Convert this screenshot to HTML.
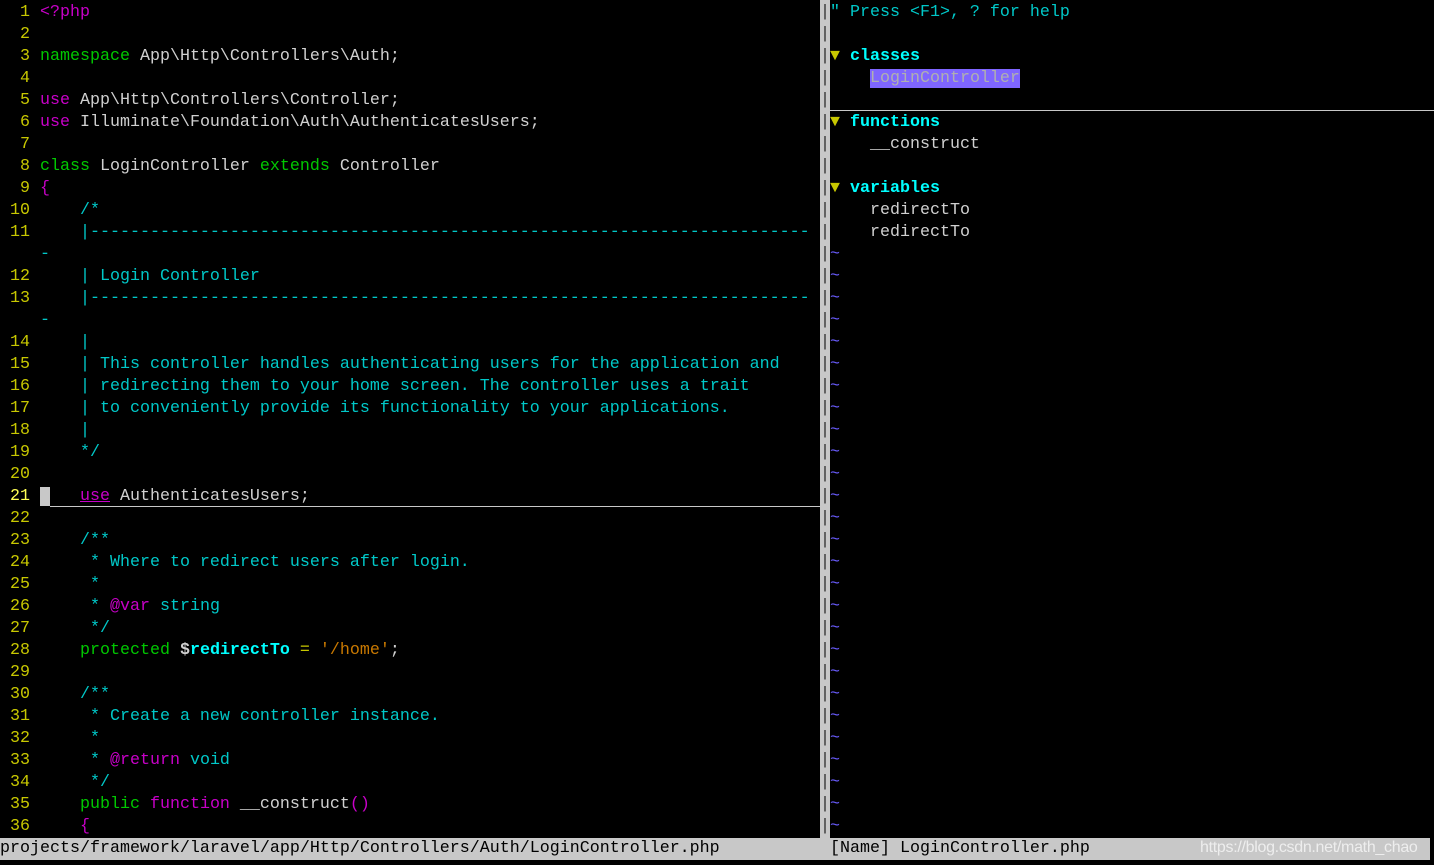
<!DOCTYPE html>
<html><head><meta charset="utf-8"><style>
body{margin:0;background:#000;width:1434px;height:865px;overflow:hidden;position:relative;font-family:"Liberation Mono",monospace;font-size:16.67px;}
pre{margin:0;font:inherit;line-height:22px;position:absolute;top:2px;white-space:pre;color:#d0d0d0;}
#L{left:0;width:820px;overflow:hidden;}
#R{left:830px;width:604px;}
.n{color:#c8c800}.N{color:#ffff55}
.g{color:#00c800}.m{color:#c800c8}.c{color:#00c8c8}.o{color:#c87800}.y{color:#c8c800}
.b{color:#00ffff;font-weight:bold}.t{color:#c8c800}.bl{color:#6a5cff}
.sel{background:#7f66ff;color:#b0b0b0}
#sep{position:absolute;left:820px;top:0;width:10px;height:838px;background:#c8c8c8;}
#sep pre{left:0;top:2px;color:#333;line-height:22px}
#st{position:absolute;left:0;top:838px;width:1430px;height:22px;background:#c8c8c8;color:#000;}
#st pre{top:0;color:#000}
</style></head><body>
<pre id="L"><span class="n">  1</span> <span class="m">&lt;?php</span>
<span class="n">  2</span>
<span class="n">  3</span> <span class="g">namespace</span> App\Http\Controllers\Auth;
<span class="n">  4</span>
<span class="n">  5</span> <span class="m">use</span> App\Http\Controllers\Controller;
<span class="n">  6</span> <span class="m">use</span> Illuminate\Foundation\Auth\AuthenticatesUsers;
<span class="n">  7</span>
<span class="n">  8</span> <span class="g">class</span> LoginController <span class="g">extends</span> Controller
<span class="n">  9</span> <span class="m">{</span>
<span class="n"> 10</span>     <span class="c">/*</span>
<span class="n"> 11</span>     <span class="c">|------------------------------------------------------------------------</span>
    <span class="c">-</span>
<span class="n"> 12</span>     <span class="c">| Login Controller</span>
<span class="n"> 13</span>     <span class="c">|------------------------------------------------------------------------</span>
    <span class="c">-</span>
<span class="n"> 14</span>     <span class="c">|</span>
<span class="n"> 15</span>     <span class="c">| This controller handles authenticating users for the application and</span>
<span class="n"> 16</span>     <span class="c">| redirecting them to your home screen. The controller uses a trait</span>
<span class="n"> 17</span>     <span class="c">| to conveniently provide its functionality to your applications.</span>
<span class="n"> 18</span>     <span class="c">|</span>
<span class="n"> 19</span>     <span class="c">*/</span>
<span class="n"> 20</span>
<span class="N"> 21</span> <span style="background:#c8c8c8"> </span>   <span class="m" style="text-decoration:underline">use</span> AuthenticatesUsers;
<span class="n"> 22</span>
<span class="n"> 23</span>     <span class="c">/**</span>
<span class="n"> 24</span>     <span class="c"> * Where to redirect users after login.</span>
<span class="n"> 25</span>     <span class="c"> *</span>
<span class="n"> 26</span>     <span class="c"> * </span><span class="m">@var</span><span class="c"> string</span>
<span class="n"> 27</span>     <span class="c"> */</span>
<span class="n"> 28</span>     <span class="g">protected</span> <span class="b" style="color:#d0d0d0">$</span><span class="b">redirectTo</span> <span class="y">=</span> <span class="o">'/home'</span>;
<span class="n"> 29</span>
<span class="n"> 30</span>     <span class="c">/**</span>
<span class="n"> 31</span>     <span class="c"> * Create a new controller instance.</span>
<span class="n"> 32</span>     <span class="c"> *</span>
<span class="n"> 33</span>     <span class="c"> * </span><span class="m">@return</span><span class="c"> void</span>
<span class="n"> 34</span>     <span class="c"> */</span>
<span class="n"> 35</span>     <span class="g">public</span> <span class="m">function</span> __construct<span class="m">()</span>
<span class="n"> 36</span>     <span class="m">{</span></pre>
<div style="position:absolute;left:50px;top:506px;width:770px;height:1px;background:#c8c8c8"></div>
<div id="sep"><pre>|
|
|
|
|
|
|
|
|
|
|
|
|
|
|
|
|
|
|
|
|
|
|
|
|
|
|
|
|
|
|
|
|
|
|
|
|
|</pre></div>
<pre id="R"><span class="c">" Press &lt;F1&gt;, ? for help</span>

<span class="t">▼</span> <span class="b">classes</span>
    <span class="sel">LoginController</span>

<span class="t">▼</span> <span class="b">functions</span>
    __construct

<span class="t">▼</span> <span class="b">variables</span>
    redirectTo
    redirectTo
<span class="bl">~
~
~
~
~
~
~
~
~
~
~
~
~
~
~
~
~
~
~
~
~
~
~
~
~
~
~</span></pre>
<div style="position:absolute;left:830px;top:110px;width:604px;height:1px;background:#c8c8c8"></div>
<div id="st"><pre style="left:0">projects/framework/laravel/app/Http/Controllers/Auth/LoginController.php</pre><pre style="left:830px">[Name] LoginController.php</pre>
<div style="position:absolute;left:1200px;top:0;font-family:'Liberation Sans',sans-serif;font-size:16px;line-height:20px;color:#eee;letter-spacing:-0.3px">https://blog.csdn.net/math_chao</div></div>
</body></html>
